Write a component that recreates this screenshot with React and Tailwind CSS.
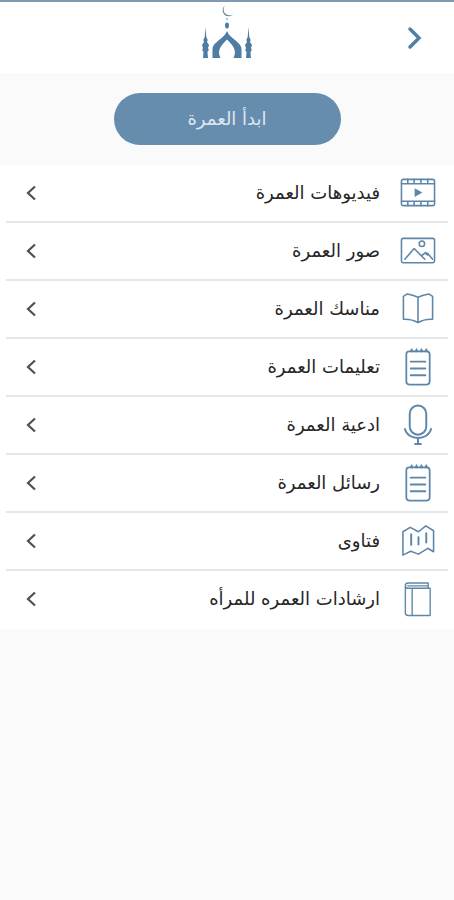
const VideoIcon = () => (
  <>
    <rect x="1.5" y="8" width="34" height="27" rx="2" />
    <path d="M1.5 12.5h34M1.5 30.5h34M8 8v4.5M14.5 8v4.5M21.5 8v4.5M28.5 8v4.5M8 30.5V35M14.5 30.5V35M21.5 30.5V35M28.5 30.5V35" />
    <path d="M15 17v9l8-4.5z" fill="currentColor" stroke="none" />
  </>
);

const ImageIcon = () => (
  <>
    <rect x="1.5" y="9" width="34" height="25" rx="2" />
    <circle cx="22.5" cy="14.5" r="2.8" />
    <path d="M5 30.5L14.5 19.5 25.5 30.5M22 27l4.5-3.500 2 2.500M27 25.500l1.500-1 5 6" />
  </>
);

const OpenBookIcon = () => (
  <path d="M18.5 10v26M18.5 10Q13 7.500 7.500 6.500L3.500 9v23.500Q12 32 18.500 36 25 32 33.500 32.500V9L29.500 6.500Q24 7.500 18.500 10z" />
);

const NotesIcon = () => (
  <>
    <rect x="6.5" y="6" width="24" height="34" rx="3" strokeWidth="1.8" />
    <path d="M11 16.500h15M11 23.500h15M11 30.500h15" strokeWidth="2" />
    <path
      d="M10.500 6l1.500-3 1.500 3zM15.500 6l1.500-3 1.500 3zM20.500 6l1.500-3 1.500 3zM25.500 6l1.500-3 1.500 3z"
      fill="currentColor"
      strokeWidth="0.8"
    />
  </>
);

const MicIcon = () => (
  <g strokeWidth="2">
    <rect x="10" y="2" width="17" height="30" rx="8.5" />
    <path d="M5 26C8 38.500 29 38.500 32 26M18.500 35.500V41M15.500 41.500h6" />
  </g>
);

const MapIcon = () => (
  <>
    <path d="M3 12.500L10.500 8l8.500 4.500L26.500 6.500l8 5V33l-6-3.500-9.500 6-8-3L3 36.500z" />
    <path d="M11.500 15v11M19 18v7.500M27 14v9.500" strokeWidth="2" />
  </>
);

const BookIcon = () => (
  <path
    d="M5.500 8v28.500q0 2.500 3 2.500h22.500V11H8.500q-3 0-3-3 0-2.500 3-2.500h20.500V11M12.500 11v28M8 8.500h20"
    strokeWidth="1.4"
  />
);

const MENU = [
  { label: "فيديوهات العمرة", icon: VideoIcon },
  { label: "صور العمرة", icon: ImageIcon },
  { label: "مناسك العمرة", icon: OpenBookIcon },
  { label: "تعليمات العمرة", icon: NotesIcon },
  { label: "ادعية العمرة", icon: MicIcon },
  { label: "رسائل العمرة", icon: NotesIcon },
  { label: "فتاوى", icon: MapIcon },
  { label: "ارشادات العمره للمرأه", icon: BookIcon },
];

const Logo = () => (
  <svg viewBox="0 0 52 56" className="h-14 w-13 text-[#4f7ca3]" fill="currentColor" aria-hidden="true">
    <path d="M24.500 1.200a6 6 0 1 0 8 8.600 5.500 5.500 0 1 1-8-8.600z" className="text-[#71889a]" />
    <circle cx="26" cy="15" r="0.8" />
    <ellipse cx="26" cy="21.500" rx="2" ry="3" />
    <path d="M26 27c1.500 4 4.500 6 8 9 4 3.500 6.500 5.500 6.500 9.500V54H32.500c3-6.500 1.500-11-6.500-18.500C18 43 16.500 47.500 19.500 54h-8V45.500c0-4 2.500-6 6.500-9.500 3.500-3 6.500-5 8-9z" />
    {/* Minarets */}
    <path d="M4.500 23l.8 10 1.400 3-.7 2 2 3-1 3 .8 2-1.300 2 .5 6H2l.5-6-1.300-2 .8-2-1-3 2-3-.7-2 1.400-3z" />
    <path d="M47.500 23l.8 10 1.400 3-.7 2 2 3-1 3 .8 2-1.300 2 .5 6H45l.5-6-1.300-2 .8-2-1-3 2-3-.7-2 1.400-3z" />
  </svg>
);

function MenuRow({ label, icon: Icon }) {
  return (
    <li className="mx-1.5 border-b-2 border-[#e5e6e7] last:border-transparent">
      <button type="button" className="flex h-14 w-full items-center gap-5 ps-3 pe-5">
        <svg
          viewBox="0 0 37 44"
          className="h-11 w-9 shrink-0 text-[#5d86a8]"
          fill="none"
          stroke="currentColor"
          strokeWidth="1.6"
          strokeLinecap="round"
          strokeLinejoin="round"
          aria-hidden="true"
        >
          <Icon />
        </svg>
        <span className="flex-1 text-start text-lg text-[#262626]">{label}</span>
        <svg viewBox="0 0 10 16" className="h-4 w-2.5" fill="none" stroke="#505050" strokeWidth="2.2" aria-hidden="true">
          <path d="M9 1.500L2 8l7 6.500" />
        </svg>
      </button>
    </li>
  );
}

export default function App() {
  return (
    <div dir="rtl" className="min-h-screen bg-[#fafafa] font-['DejaVu_Sans',sans-serif]">
      {/* Header */}
      <header className="grid grid-cols-3 items-center border-t-2 border-[#8099b0] bg-white">
        <button type="button" aria-label="رجوع" className="ms-8 justify-self-start py-2">
          <svg
            viewBox="0 0 16 24"
            className="h-6 w-4"
            fill="none"
            stroke="#5280a5"
            strokeWidth="3.5"
            strokeLinecap="round"
            aria-hidden="true"
          >
            <path d="M4 3l9 9-9 9" />
          </svg>
        </button>
        <div className="justify-self-center pt-0.5 pb-[13px]">
          <Logo />
        </div>
      </header>

      {/* Start */}
      <div className="flex justify-center py-5">
        <button type="button" className="h-13 w-1/2 rounded-full bg-[#678dae] text-lg text-[#dce8f0]">
          ابدأ العمرة
        </button>
      </div>

      <nav>
        <ul className="bg-white">
          {MENU.map((item) => (
            <MenuRow key={item.label} {...item} />
          ))}
        </ul>
      </nav>
    </div>
  );
}
